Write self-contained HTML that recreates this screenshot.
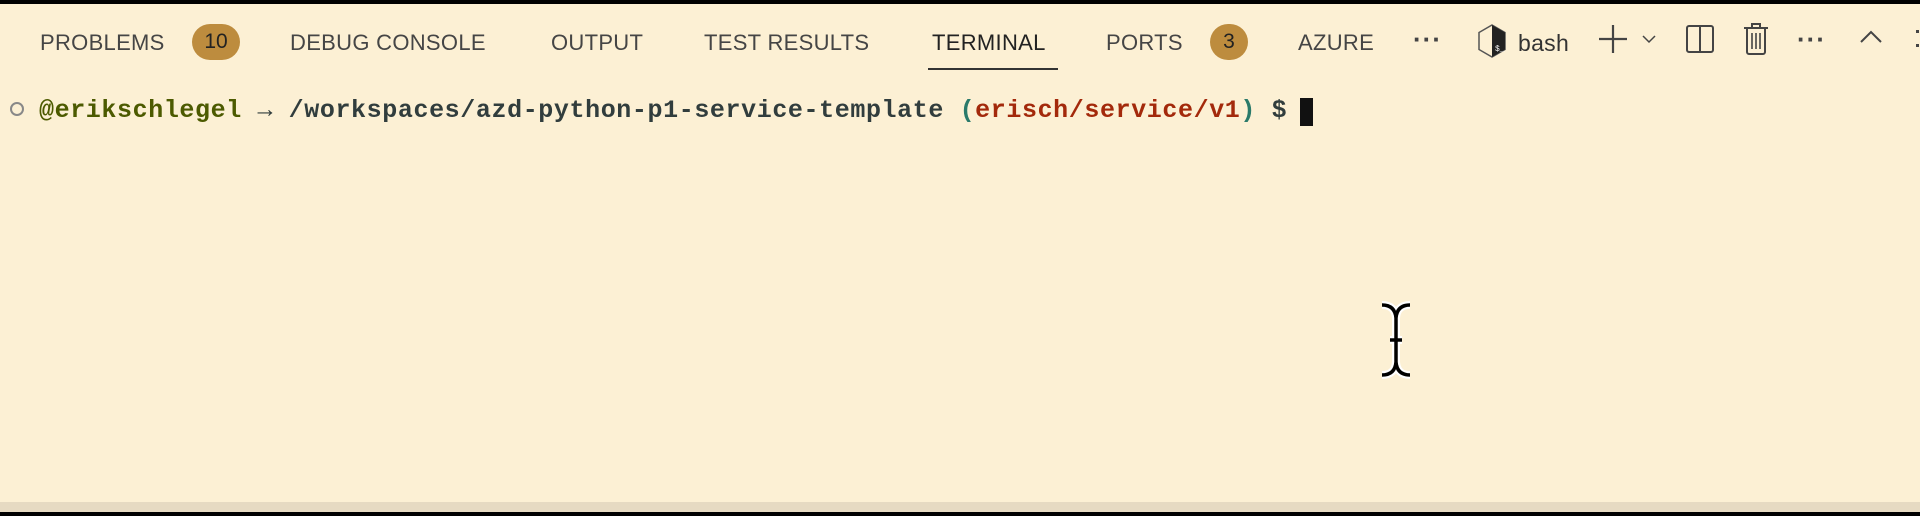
<!DOCTYPE html>
<html><head><meta charset="utf-8"><style>
html,body{margin:0;padding:0}
body{width:1920px;height:516px;background:#fcf0d4;position:relative;overflow:hidden;font-family:"Liberation Sans",sans-serif}
.top{position:absolute;left:0;top:0;width:1920px;height:4px;background:#000}
.bot{position:absolute;left:0;top:502px;width:1920px;height:10px;background:#e6dac2}
.bot2{position:absolute;left:0;top:512px;width:1920px;height:4px;background:#000}
.tab{position:absolute;top:29px;font-size:22px;color:#454545;line-height:28px;white-space:nowrap;letter-spacing:0.3px}
.badge{position:absolute;top:24px;height:36px;border-radius:18px;background:#bd8c3e;color:#222;font-size:21px;line-height:36px;text-align:center}
.term{position:absolute;left:39px;top:95px;font-family:"Liberation Mono",monospace;font-weight:bold;font-size:25px;letter-spacing:0.6px;line-height:32px;white-space:pre;color:#313d3d}
.dots{position:absolute;font-size:26px;font-weight:bold;color:#444;letter-spacing:1px}
</style></head><body>
<div class="top"></div>
<div class="tab" style="left:40px">PROBLEMS</div>
<div class="badge" style="left:192px;width:48px">10</div>
<div class="tab" style="left:290px">DEBUG CONSOLE</div>
<div class="tab" style="left:551px">OUTPUT</div>
<div class="tab" style="left:704px">TEST RESULTS</div>
<div class="tab" style="left:932px;color:#222">TERMINAL</div>
<div style="position:absolute;left:928px;top:68px;width:130px;height:2px;background:#333"></div>
<div class="tab" style="left:1106px">PORTS</div>
<div class="badge" style="left:1210px;width:38px">3</div>
<div class="tab" style="left:1298px">AZURE</div>
<div class="dots" style="left:1413px;top:24px">···</div>
<svg style="position:absolute;left:1476px;top:23px" width="32" height="36" viewBox="0 0 32 36"><path d="M16 2 L29 9.5 L29 26.5 L16 34 L3 26.5 L3 9.5 Z" fill="#fcf0d4" stroke="#555" stroke-width="1.5"/><path d="M16 2 L29 9.5 L29 26.5 L16 34 Z" fill="#222"/><text x="19" y="28" font-size="8" fill="#fff" font-family="Liberation Mono">$_</text></svg>
<div class="tab" style="left:1518px;color:#333;font-size:23px">bash</div>
<svg style="position:absolute;left:1596px;top:23px" width="70" height="32"><path d="M17 2V30M3 16H31" stroke="#444" stroke-width="2.2"/><path d="M47 13l6 6 6-6" stroke="#444" stroke-width="1.5" fill="none"/></svg>
<svg style="position:absolute;left:1684px;top:23px" width="32" height="32"><rect x="3" y="3" width="26" height="26" rx="2" fill="none" stroke="#444" stroke-width="2"/><path d="M16 3V29" stroke="#444" stroke-width="2"/></svg>
<svg style="position:absolute;left:1742px;top:22px" width="28" height="34"><path d="M2 6H26M10 6V2H18V6" stroke="#444" stroke-width="2" fill="none"/><path d="M5 6V30a2 2 0 0 0 2 2H21a2 2 0 0 0 2-2V6" stroke="#444" stroke-width="2" fill="none"/><path d="M10 11V27M14 11V27M18 11V27" stroke="#444" stroke-width="1.6"/></svg>
<div class="dots" style="left:1797px;top:24px">···</div>
<svg style="position:absolute;left:1858px;top:28px" width="26" height="18"><path d="M3 14L13 4L23 14" stroke="#444" stroke-width="2" fill="none"/></svg>
<div style="position:absolute;left:1916px;top:30px;width:3px;height:3px;background:#444"></div>
<div style="position:absolute;left:1916px;top:44px;width:3px;height:3px;background:#444"></div>
<svg style="position:absolute;left:9px;top:101px" width="16" height="16"><circle cx="8" cy="8" r="6" fill="none" stroke="#888" stroke-width="2"/></svg>
<div class="term"><span style="color:#4c5a00">@erikschlegel</span> → /workspaces/azd-python-p1-service-template <span style="color:#2a7a6a">(</span><span style="color:#a3290b">erisch/service/v1</span><span style="color:#2a7a6a">)</span> $ </div>
<div style="position:absolute;left:1300px;top:98px;width:13px;height:28px;background:#111"></div>
<svg style="position:absolute;left:1376px;top:300px" width="40" height="80" viewBox="0 0 40 80"><path d="M6 5 Q19 5 20 18 Q21 5 34 5 M20 18 V62 M6 75 Q19 75 20 62 Q21 75 34 75 M14 40 H26" stroke="#fff" stroke-width="8" fill="none"/><path d="M6 5 Q19 5 20 18 Q21 5 34 5 M20 18 V62 M6 75 Q19 75 20 62 Q21 75 34 75 M14 40 H26" stroke="#000" stroke-width="3.5" fill="none"/></svg>
<div class="bot"></div><div class="bot2"></div>
</body></html>
